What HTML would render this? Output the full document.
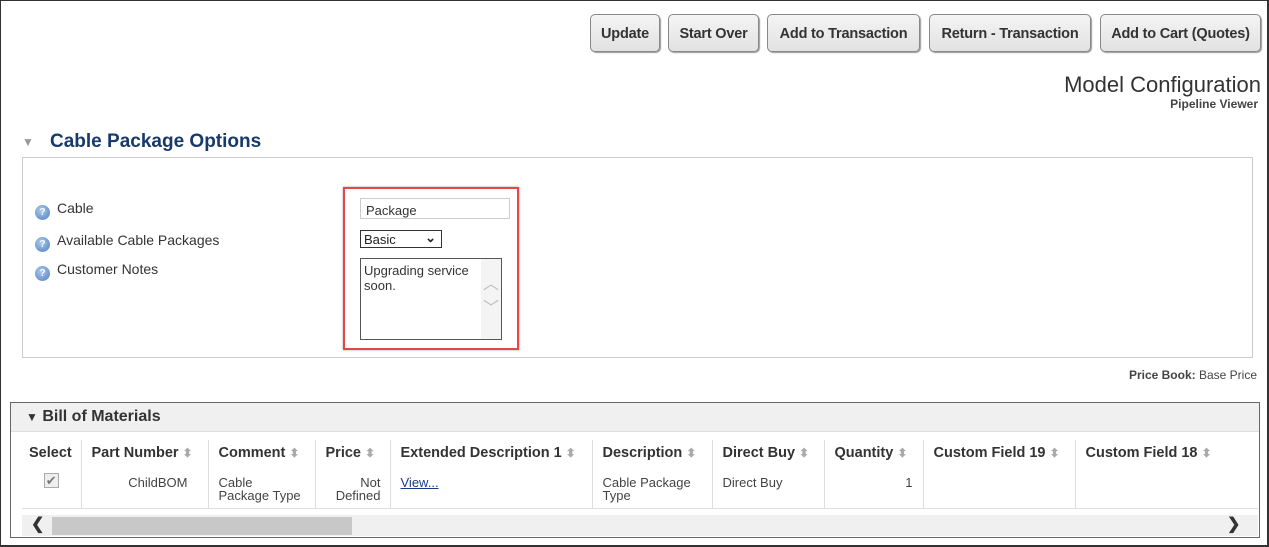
<!DOCTYPE html>
<html><head><meta charset="utf-8"><style>
*{box-sizing:border-box;margin:0;padding:0}
body{width:1269px;height:547px;background:#fff;font-family:"Liberation Sans",Arial,sans-serif;position:relative;overflow:hidden;color:#333}
.frame{position:absolute;left:0;top:0;width:1269px;height:547px;border:1px solid #333;border-right-width:2px;border-bottom-width:2px}
.a{position:absolute}
.btn{position:absolute;top:14px;height:38px;border:1px solid #888;border-radius:5px;background:linear-gradient(#f4f4f4,#e2e2e2);font-weight:bold;font-size:14.5px;color:#333;text-align:center;line-height:38px;box-shadow:1px 1px 1px #999;letter-spacing:-0.2px}
.lbl{position:absolute;left:35px;font-size:14px;color:#333}
.ic{display:inline-block;width:15px;height:15px;border-radius:50%;background:radial-gradient(circle at 40% 35%,#a9c8ee,#4f7fc0);vertical-align:-2px;margin-right:7px;color:#fff;font-size:10px;font-weight:bold;text-align:center;line-height:15px}
table{border-collapse:collapse;position:absolute;left:22px;top:440px;width:1236px;font-size:14px}
th{height:25px;text-align:left;padding:1px 10px 0;font-weight:bold;color:#333;border-right:1px solid #ddd;white-space:nowrap;font-size:14.5px}
td{height:43px;vertical-align:top;padding:11px 10px 0;font-size:13px;line-height:13px;color:#444;border-right:1px solid #ddd;border-bottom:1px solid #ddd}
.s{color:#aaa;font-size:12px;margin-left:4px}
</style></head><body>
<div class="frame"></div>
<div class="btn" style="left:590px;width:70px">Update</div>
<div class="btn" style="left:668px;width:91px">Start Over</div>
<div class="btn" style="left:767px;width:153px">Add to Transaction</div>
<div class="btn" style="left:929px;width:162px">Return - Transaction</div>
<div class="btn" style="left:1100px;width:161px">Add to Cart (Quotes)</div>
<div class="a" style="right:8px;top:72px;font-size:22px;color:#333">Model Configuration</div>
<div class="a" style="right:11px;top:97px;font-size:12px;font-weight:bold;color:#444">Pipeline Viewer</div>
<div class="a" style="left:22px;top:135px;font-size:12px;color:#999">▼</div>
<div class="a" style="left:50px;top:131px;font-size:19px;font-weight:bold;color:#173a6a">Cable Package Options</div>
<div class="a" style="left:22px;top:157px;width:1231px;height:201px;border:1px solid #ccc"></div>
<div class="lbl" style="top:200px"><span class="ic">?</span>Cable</div>
<div class="lbl" style="top:232px"><span class="ic">?</span>Available Cable Packages</div>
<div class="lbl" style="top:261px"><span class="ic">?</span>Customer Notes</div>
<div class="a" style="left:343px;top:187px;width:176px;height:163px;border:2px solid #e84545;box-shadow:0 0 2px #999"></div>
<div class="a" style="left:360px;top:198px;width:150px;height:21px;border:1px solid #ccc;font-size:13px;padding:4px 5px;color:#333">Package</div>
<div class="a" style="left:360px;top:230px;width:82px;height:18px;border:1px solid #333;font-size:13px;padding:1px 3px;color:#222">Basic<span style="position:absolute;right:5px;top:-1px;font-size:13px;font-weight:bold">⌄</span></div>
<div class="a" style="left:360px;top:258px;width:142px;height:82px;border:1px solid #555;font-size:13px;padding:4px 3px;line-height:15px;color:#333">Upgrading service<br>soon.<div class="a" style="right:0;top:0;width:20px;height:80px;background:#f4f4f4;color:#bbb;font-size:16px;text-align:center;padding-top:14px;line-height:24px">︿<br>﹀</div></div>
<div class="a" style="right:12px;top:368px;font-size:12px;color:#444"><b>Price Book:</b> Base Price</div>
<div class="a" style="left:10px;top:402px;width:1250px;height:136px;border:1px solid #666"></div>
<div class="a" style="left:11px;top:403px;width:1248px;height:29px;background:#f0f0f0;border-bottom:1px solid #ddd"></div>
<div class="a" style="left:26px;top:408px;font-size:16px;font-weight:bold;color:#333"><span style="font-size:12px">▼</span> Bill of Materials</div>
<table>
<tr><th style="width:59px;padding:0 7px">Select</th><th style="width:127px">Part Number<span class="s">⬍</span></th><th style="width:107px">Comment<span class="s">⬍</span></th><th style="width:75px">Price<span class="s">⬍</span></th><th style="width:202px">Extended Description 1<span class="s">⬍</span></th><th style="width:120px">Description<span class="s">⬍</span></th><th style="width:112px">Direct Buy<span class="s">⬍</span></th><th style="width:99px">Quantity<span class="s">⬍</span></th><th style="width:152px">Custom Field 19<span class="s">⬍</span></th><th style="border-right:none">Custom Field 18<span class="s">⬍</span></th></tr>
<tr><td style="text-align:center;padding-top:8px"><span style="display:inline-block;width:15px;height:15px;border:1px solid #aaa;background:#eee;font-size:13px;line-height:13px;color:#777">✔</span></td><td style="text-align:right;padding-right:20px">ChildBOM</td><td>Cable<br>Package Type</td><td style="text-align:right;padding-right:9px">Not<br>Defined</td><td><span style="color:#1a3a8a;text-decoration:underline">View...</span></td><td>Cable Package<br>Type</td><td>Direct Buy</td><td style="text-align:right">1</td><td></td><td style="border-right:none"></td></tr>
</table>
<div class="a" style="left:22px;top:515px;width:1236px;height:21px;background:#f0f0f0"></div>
<div class="a" style="left:52px;top:517px;width:300px;height:18px;background:#c8c8c8"></div>
<div class="a" style="left:31px;top:514px;font-size:16px;font-weight:bold;color:#333">❮</div>
<div class="a" style="left:1227px;top:514px;font-size:16px;font-weight:bold;color:#333">❯</div>
</body></html>
